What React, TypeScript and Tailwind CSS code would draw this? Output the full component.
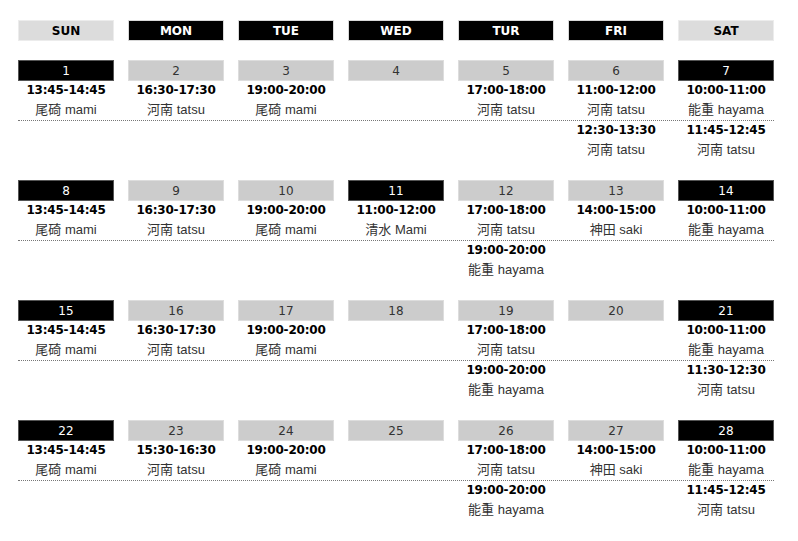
import React from "react";

type Entry = { t: string; n: string };
type Day = { d: number; dark: boolean; e: Entry[] };

const M = { t: "13:45-14:45", n: "尾碕 mami" };
const T1 = { t: "16:30-17:30", n: "河南 tatsu" };
const MT = { t: "19:00-20:00", n: "尾碕 mami" };
const TH = { t: "17:00-18:00", n: "河南 tatsu" };
const HY = { t: "19:00-20:00", n: "能重 hayama" };
const SA = { t: "10:00-11:00", n: "能重 hayama" };
const SK = { t: "14:00-15:00", n: "神田 saki" };

const weeks: Day[][] = [
  [
    { d: 1, dark: true, e: [M] },
    { d: 2, dark: false, e: [T1] },
    { d: 3, dark: false, e: [MT] },
    { d: 4, dark: false, e: [] },
    { d: 5, dark: false, e: [TH] },
    { d: 6, dark: false, e: [{ t: "11:00-12:00", n: "河南 tatsu" }, { t: "12:30-13:30", n: "河南 tatsu" }] },
    { d: 7, dark: true, e: [SA, { t: "11:45-12:45", n: "河南 tatsu" }] },
  ],
  [
    { d: 8, dark: true, e: [M] },
    { d: 9, dark: false, e: [T1] },
    { d: 10, dark: false, e: [MT] },
    { d: 11, dark: true, e: [{ t: "11:00-12:00", n: "清水 Mami" }] },
    { d: 12, dark: false, e: [TH, HY] },
    { d: 13, dark: false, e: [SK] },
    { d: 14, dark: true, e: [SA] },
  ],
  [
    { d: 15, dark: true, e: [M] },
    { d: 16, dark: false, e: [T1] },
    { d: 17, dark: false, e: [MT] },
    { d: 18, dark: false, e: [] },
    { d: 19, dark: false, e: [TH, HY] },
    { d: 20, dark: false, e: [] },
    { d: 21, dark: true, e: [SA, { t: "11:30-12:30", n: "河南 tatsu" }] },
  ],
  [
    { d: 22, dark: true, e: [M] },
    { d: 23, dark: false, e: [{ t: "15:30-16:30", n: "河南 tatsu" }] },
    { d: 24, dark: false, e: [MT] },
    { d: 25, dark: false, e: [] },
    { d: 26, dark: false, e: [TH, HY] },
    { d: 27, dark: false, e: [SK] },
    { d: 28, dark: true, e: [SA, { t: "11:45-12:45", n: "河南 tatsu" }] },
  ],
];

const heads = [
  { l: "SUN", dark: false },
  { l: "MON", dark: true },
  { l: "TUE", dark: true },
  { l: "WED", dark: true },
  { l: "TUR", dark: true },
  { l: "FRI", dark: true },
  { l: "SAT", dark: false },
];

const font = { fontFamily: '"DejaVu Sans", "Noto Sans CJK JP", sans-serif' };
const nameFont = { fontFamily: '"Liberation Sans", "Noto Sans CJK JP", sans-serif' };

function EntryCell({ e }: { e?: Entry }) {
  return (
    <div className="flex flex-col items-center">
      <div className="h-[19px] leading-[19px] text-[12px] font-bold text-black tracking-[-0.2px]">
        {e ? e.t : ""}
      </div>
      <div className="h-[20px] leading-[20px] text-[13px] text-[#333]" style={nameFont}>
        {e ? e.n : ""}
      </div>
    </div>
  );
}

export default function App() {
  return (
    <div className="w-[798px] h-[541px] bg-white pt-[20px] pl-[18px]" style={font}>
      <div className="grid grid-cols-[repeat(7,96px)] gap-x-[14px]">
        {heads.map((h) => (
          <div
            key={h.l}
            className={
              h.dark
                ? "h-[21px] flex items-center justify-center bg-black text-white border border-[#d8d8d8] text-[12px] font-bold"
                : "h-[21px] flex items-center justify-center bg-[#dcdcdc] text-black border border-[#ececec] text-[12px] font-bold"
            }
          >
            {h.l}
          </div>
        ))}
      </div>
      <div className="mt-[19px] flex flex-col">
        {weeks.map((w, wi) => (
          <div key={wi} className="h-[120px] w-[756px]">
            <div className="grid grid-cols-[repeat(7,96px)] gap-x-[14px]">
              {w.map((d) => (
                <div
                  key={d.d}
                  className={
                    d.dark
                      ? "h-[21px] flex items-center justify-center bg-black text-white border border-[#555] text-[12px]"
                      : "h-[21px] flex items-center justify-center bg-[#cccccc] text-[#333] border border-[#dddddd] text-[12px]"
                  }
                >
                  {d.d}
                </div>
              ))}
            </div>
            <div className="grid grid-cols-[repeat(7,96px)] gap-x-[14px] border-b border-dotted border-[#777]">
              {w.map((d) => (
                <EntryCell key={d.d} e={d.e[0]} />
              ))}
            </div>
            <div className="grid grid-cols-[repeat(7,96px)] gap-x-[14px]">
              {w.map((d) => (
                <EntryCell key={d.d} e={d.e[1]} />
              ))}
            </div>
          </div>
        ))}
      </div>
    </div>
  );
}
